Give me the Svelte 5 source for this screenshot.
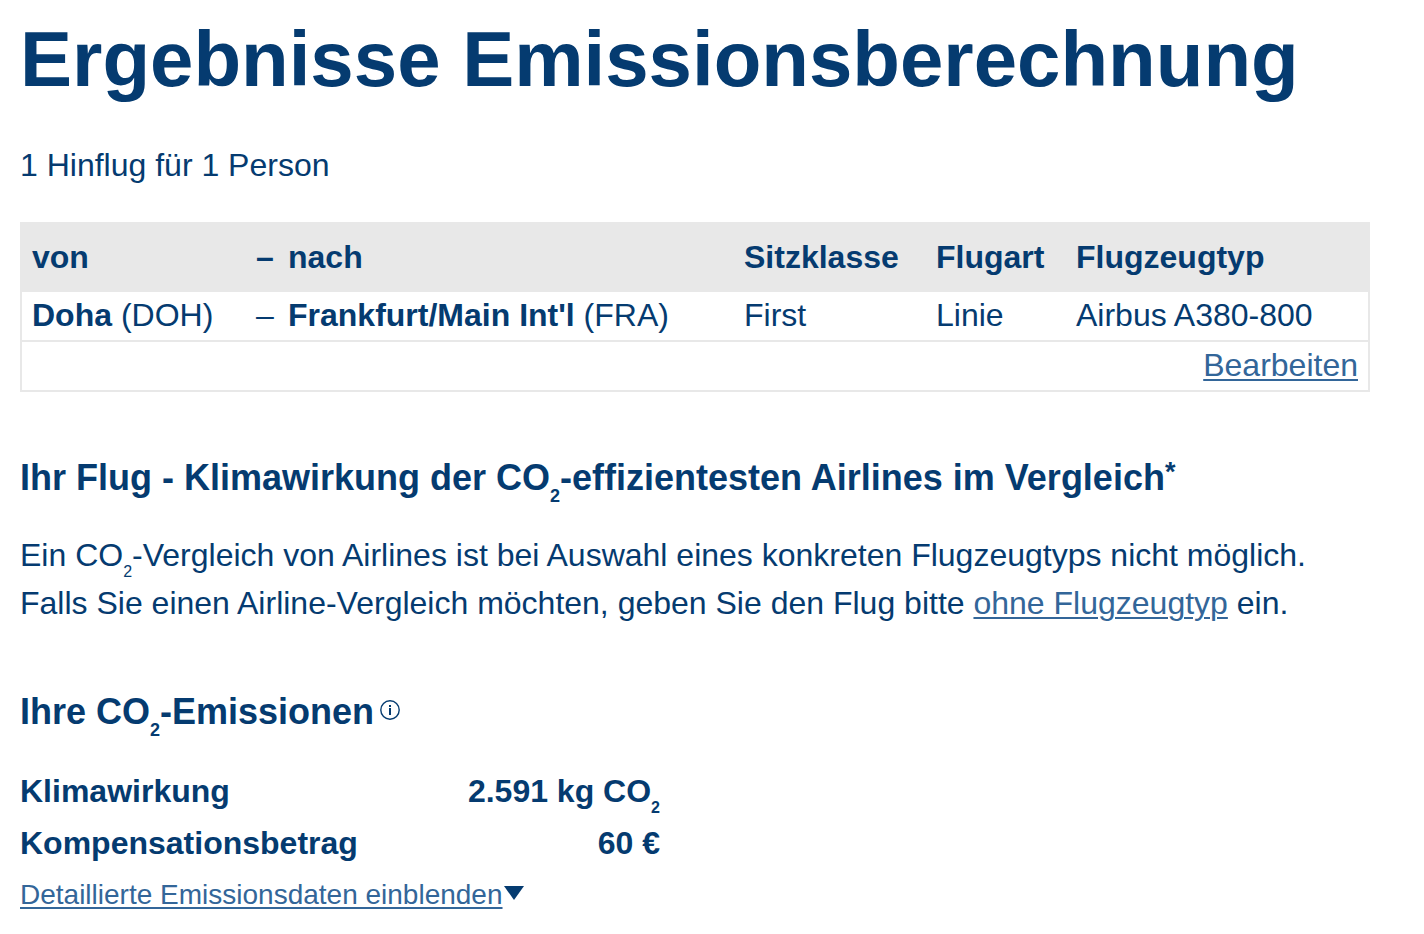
<script>
  const flights = [
    { from: 'Doha', fromCode: 'DOH', to: "Frankfurt/Main Int'l", toCode: 'FRA', seat: 'First', type: 'Linie', plane: 'Airbus A380-800' },
  ];
</script>

<main>
  <h1>Ergebnisse Emissionsberechnung</h1>
  <p class="trip">1 Hinflug für 1 Person</p>

  <table class="flights">
    <thead>
      <tr>
        <th class="from">von</th>
        <th class="dash">–</th>
        <th class="to">nach</th>
        <th class="seat">Sitzklasse</th>
        <th class="type">Flugart</th>
        <th>Flugzeugtyp</th>
      </tr>
    </thead>
    <tbody>
      {#each flights as f}
        <tr>
          <td><b>{f.from}</b> ({f.fromCode})</td>
          <td class="dash">–</td>
          <td><b>{f.to}</b> ({f.toCode})</td>
          <td>{f.seat}</td>
          <td>{f.type}</td>
          <td>{f.plane}</td>
        </tr>
      {/each}
      <tr>
        <td class="edit" colspan="6"><a href="#bearbeiten">Bearbeiten</a></td>
      </tr>
    </tbody>
  </table>

  <section class="compare">
    <h2>Ihr Flug - Klimawirkung der CO<sub>2</sub>-effizientesten Airlines im Vergleich<sup>*</sup></h2>
    <p>
      Ein CO<sub>2</sub>-Vergleich von Airlines ist bei Auswahl eines konkreten Flugzeugtyps nicht möglich.<br />
      Falls Sie einen Airline-Vergleich möchten, geben Sie den Flug bitte <a href="#flug">ohne Flugzeugtyp</a> ein.
    </p>
  </section>

  <section class="emissions">
    <h2>
      Ihre CO<sub>2</sub>-Emissionen<button class="info" aria-label="Info">
        <svg viewBox="0 0 20 20" width="20" height="20" fill="none" stroke="currentColor">
          <circle cx="10" cy="10" r="9.2" stroke-width="1.4" />
          <path d="M10 8v7" stroke-width="2" />
          <path d="M10 5v2" stroke-width="2" />
        </svg>
      </button>
    </h2>
    <table class="totals">
      <tbody>
        <tr><th>Klimawirkung</th><td>2.591 kg CO<sub>2</sub></td></tr>
        <tr><th>Kompensationsbetrag</th><td>60 €</td></tr>
      </tbody>
    </table>
    <a class="details" href="#details">Detaillierte Emissionsdaten einblenden</a><svg class="caret" viewBox="0 0 20 14" width="20" height="14"><path d="M0 0h20L10 14z" fill="currentColor" /></svg>
  </section>
</main>

<style>
  :global(body) { margin:0; background:#fff; }
  main { padding:20px 54px 20px 20px; font-family:"Liberation Sans", Arial, sans-serif; font-size:32px; line-height:48px; color:#053b70; }
  h1 { margin:0; font-size:78px; line-height:78px; font-weight:700; }
  p { margin:0; }
  a { color:#336699; text-decoration:underline; text-decoration-thickness:2px; text-underline-offset:3px; }
  sub { font-size:16px; line-height:0; vertical-align:-11px; }
  sup { font-size:27px; line-height:0; vertical-align:9px; }
  .trip { margin:43px 0 33px; }

  table { border-collapse:collapse; }
  th { text-align:left; font-weight:700; }
  .flights { width:100%; border:2px solid #e8e8e8; white-space:nowrap; }
  .flights th { padding:9px 10px; background:#e8e8e8; }
  .flights td { padding:0 10px 2px; line-height:46px; border-top:2px solid #e8e8e8; }
  .from { width:204px; }
  .flights .dash { width:18px; padding-right:4px; }
  .to { width:436px; }
  .seat { width:172px; }
  .type { width:120px; }
  .flights .edit { text-align:right; }

  .compare { margin-top:62px; }
  h2 { margin:0; font-size:36px; line-height:48px; }
  h2 sub { font-size:18px; vertical-align:-12px; }
  .compare p { margin-top:29px; }
  .emissions { margin-top:61px; }
  .info { padding:0; margin-left:6px; border:none; background:none; color:inherit; line-height:0; vertical-align:4px; cursor:pointer; }
  .totals { width:640px; margin-top:29px; }
  .totals th, .totals td { padding:2px 0; }
  .totals td { text-align:right; font-weight:700; }
  .details { font-size:28px; }
  .caret { margin-left:1px; vertical-align:4px; }
</style>
